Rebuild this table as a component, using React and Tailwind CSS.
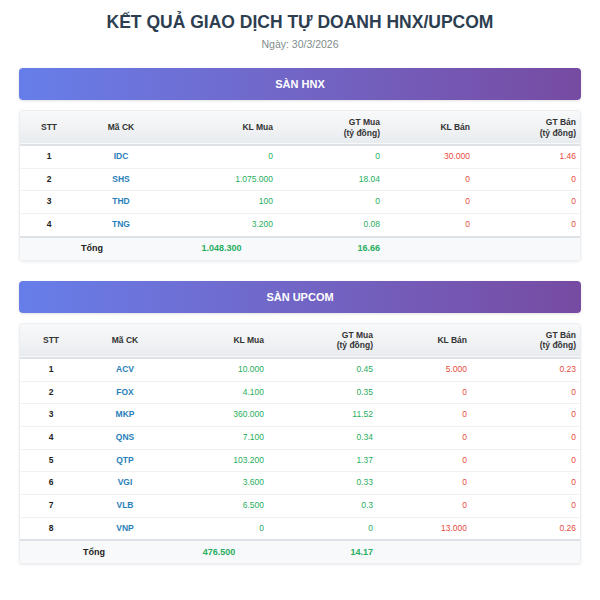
import React from 'react';

const hnx = {
  title: 'SÀN HNX',
  widths: [58, 86, 115, 107, 90, 106],
  rows: [
    ['1', 'IDC', '0', '0', '30.000', '1.46'],
    ['2', 'SHS', '1.075.000', '18.04', '0', '0'],
    ['3', 'THD', '100', '0', '0', '0'],
    ['4', 'TNG', '3.200', '0.08', '0', '0'],
  ],
  totalKL: '1.048.300',
  totalGT: '16.66',
};

const upcom = {
  title: 'SÀN UPCOM',
  widths: [62, 86, 102, 109, 94, 109],
  rows: [
    ['1', 'ACV', '10.000', '0.45', '5.000', '0.23'],
    ['2', 'FOX', '4.100', '0.35', '0', '0'],
    ['3', 'MKP', '360.000', '11.52', '0', '0'],
    ['4', 'QNS', '7.100', '0.34', '0', '0'],
    ['5', 'QTP', '103.200', '1.37', '0', '0'],
    ['6', 'VGI', '3.600', '0.33', '0', '0'],
    ['7', 'VLB', '6.500', '0.3', '0', '0'],
    ['8', 'VNP', '0', '0', '13.000', '0.26'],
  ],
  totalKL: '476.500',
  totalGT: '14.17',
};

function Market({ data }) {
  return (
    <div>
      {/* Banner */}
      <div className="h-[32px] rounded-[4px] bg-gradient-to-r from-[#667eea] to-[#764ba2] flex items-center justify-center shadow-[0_1px_3px_rgba(0,0,0,0.12)]">
        <span className="text-white font-bold text-[11px]">{data.title}</span>
      </div>

      {/* Table */}
      <div className="mt-[10px] bg-white rounded-[4px] border border-[#eceef1] shadow-[0_1px_3px_rgba(0,0,0,0.08)] overflow-hidden">
        <table className="w-full table-fixed border-collapse text-[8.5px]">
          <colgroup>
            {data.widths.map((w, i) => (
              <col key={i} style={{ width: w }} />
            ))}
          </colgroup>
          <thead>
            <tr className="bg-gradient-to-b from-[#f8f9fa] to-[#e9ecef] border-b-2 border-[#dee2e6] text-[#333] font-bold leading-[10.5px]">
              <th className="py-[6px] px-[6px] text-center">STT</th>
              <th className="py-[6px] px-[6px] text-center">Mã CK</th>
              <th className="py-[6px] px-[6px] text-right">KL Mua</th>
              <th className="py-[6px] px-[6px] text-right">GT Mua<br />(tỷ đồng)</th>
              <th className="py-[6px] px-[6px] text-right">KL Bán</th>
              <th className="py-[6px] px-[6px] text-right">GT Bán<br />(tỷ đồng)</th>
            </tr>
          </thead>
          <tbody>
            {data.rows.map(r => (
              <tr key={r[1]} className="border-b border-[#f0f1f3] leading-[11.7px]">
                <td className="py-[5px] px-[6px] text-center font-bold text-[#222]">{r[0]}</td>
                <td className="py-[5px] px-[6px] text-center font-bold text-[#2980b9]">{r[1]}</td>
                <td className="py-[5px] px-[6px] text-right text-[#27ae60]">{r[2]}</td>
                <td className="py-[5px] px-[6px] text-right text-[#27ae60]">{r[3]}</td>
                <td className="py-[5px] px-[6px] text-right text-[#e74c3c]">{r[4]}</td>
                <td className="py-[5px] px-[6px] text-right text-[#e74c3c]">{r[5]}</td>
              </tr>
            ))}
          </tbody>
          <tfoot>
            <tr className="bg-[#f8f9fa] border-t-2 border-[#dee2e6] font-bold leading-[11px] text-[9px]">
              <td colSpan={2} className="py-[5.5px] px-[6px] text-center text-[#222]">Tổng</td>
              <td className="py-[5.5px] px-[6px] text-center text-[#27ae60]">{data.totalKL}</td>
              <td className="py-[5.5px] px-[6px] text-right text-[#27ae60]">{data.totalGT}</td>
              <td className="py-[5.5px] px-[6px]"></td>
              <td className="py-[5.5px] px-[6px]"></td>
            </tr>
          </tfoot>
        </table>
      </div>
    </div>
  );
}

export default function App() {
  return (
    <div className="min-h-screen bg-white px-[19px] pt-[10px] pb-[30px] font-['Liberation_Sans',Arial,sans-serif]">
      <h1 className="text-center text-[17.5px] leading-[24px] font-bold text-[#2c3e50]">
        KẾT QUẢ GIAO DỊCH TỰ DOANH HNX/UPCOM
      </h1>
      <p className="mt-[3px] text-center text-[10.5px] leading-[14px] text-[#7f8c8d]">Ngày: 30/3/2026</p>

      <div className="mt-[17px]">
        <Market data={hnx} />
      </div>
      <div className="mt-[20px]">
        <Market data={upcom} />
      </div>
    </div>
  );
}
